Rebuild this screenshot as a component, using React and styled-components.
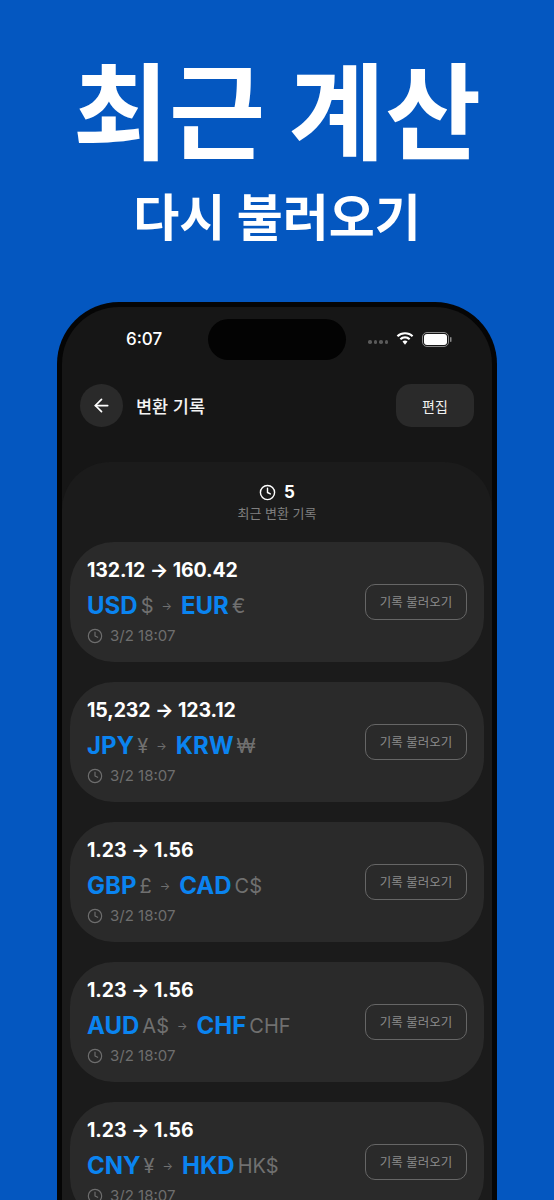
import React from 'react';
import styled, { createGlobalStyle } from 'styled-components';
import { ArrowLeft, Clock } from 'lucide-react';

const GlobalStyle = createGlobalStyle`
  html, body {
    margin: 0;
    padding: 0;
    background: #0457c0;
  }
  * {
    box-sizing: border-box;
  }
`;

const KR = `"Inter", "Noto Sans CJK KR", sans-serif`;

const Page = styled.div`
  width: 554px;
  height: 1200px;
  overflow: hidden;
  background: #0457c0;
  font-family: ${KR};
  display: flex;
  flex-direction: column;
  align-items: center;
`;

const Headline = styled.h1`
  margin: 40px 0 0;
  font-family: "Noto Sans CJK KR", sans-serif;
  font-size: 104.5px;
  line-height: 132px;
  font-weight: 700;
  color: #fff;
  white-space: nowrap;
`;

const SubHeadline = styled.h2`
  margin: 5px 0 0;
  font-family: "Noto Sans CJK KR", sans-serif;
  font-size: 50px;
  line-height: 74px;
  font-weight: 700;
  color: #fff;
  white-space: nowrap;
`;

const Phone = styled.div`
  margin-top: 51px;
  width: 440px;
  flex: 1;
  background: #161616;
  border: 5px solid #050505;
  border-bottom: none;
  border-radius: 62px 62px 0 0;
  display: flex;
  flex-direction: column;
  position: relative;
`;

const Island = styled.div`
  position: absolute;
  top: 12px;
  left: 146px;
  width: 138px;
  height: 41px;
  border-radius: 21px;
  background: #030303;
`;

const StatusBar = styled.div`
  height: 60px;
  padding: 4px 40px 0 64px;
  display: flex;
  align-items: center;
  justify-content: space-between;
`;

const Time = styled.span`
  font-size: 17px;
  font-weight: 500;
  color: #fff;
`;

const StatusIcons = styled.div`
  display: flex;
  align-items: center;
  gap: 8px;
`;

const Dots = styled.div`
  display: flex;
  gap: 2px;
  margin-top: 6px;
`;

const Dot = styled.i`
  width: 3.5px;
  height: 3.5px;
  border-radius: 50%;
  background: #5a5a5a;
`;

const NavBar = styled.div`
  margin-top: 17px;
  padding: 0 18px;
  display: flex;
  align-items: center;
  gap: 13px;
`;

const BackButton = styled.div`
  width: 43px;
  height: 43px;
  border-radius: 50%;
  background: #2a2a2a;
  color: #fff;
  display: flex;
  align-items: center;
  justify-content: center;
`;

const NavTitle = styled.span`
  flex: 1;
  font-size: 17.5px;
  font-weight: 500;
  color: #f4f4f4;
`;

const EditButton = styled.div`
  width: 78px;
  height: 43px;
  border-radius: 15px;
  background: #2a2a2a;
  color: #f0f0f0;
  font-size: 14px;
  font-weight: 400;
  display: flex;
  align-items: center;
  justify-content: center;
`;

const Panel = styled.div`
  margin-top: 35px;
  flex: 1;
  padding: 0 8px;
  background: #1b1b1b;
  border-radius: 48px 48px 0 0;
  display: flex;
  flex-direction: column;
`;

const Summary = styled.div`
  height: 80px;
  padding-top: 19px;
  display: flex;
  flex-direction: column;
  align-items: center;
`;

const SummaryCount = styled.div`
  display: flex;
  align-items: center;
  gap: 8px;
  font-size: 17px;
  line-height: 23px;
  font-weight: 700;
  color: #fff;
`;

const SummaryLabel = styled.div`
  font-size: 13px;
  line-height: 18px;
  color: #808080;
`;

const List = styled.div`
  display: flex;
  flex-direction: column;
  gap: 20px;
`;

const Card = styled.div`
  height: 120px;
  flex: none;
  padding: 0 17px;
  border-radius: 44px;
  background: #2a2a2a;
  display: flex;
  align-items: center;
  justify-content: space-between;
`;

const CardInfo = styled.div`
  margin-bottom: 2px;
  display: flex;
  flex-direction: column;
`;

const Amounts = styled.div`
  font-size: 19.5px;
  line-height: 24px;
  font-weight: 700;
  letter-spacing: -0.1px;
  color: #fff;
`;

const CurrencyRow = styled.div`
  margin-top: 8px;
  height: 32px;
  display: flex;
  align-items: center;
`;

const Code = styled.span`
  font-size: 24px;
  font-weight: 700;
  color: #0a84f0;
`;

const Symbol = styled.span`
  margin-left: 3px;
  font-size: 20px;
  color: #707070;
`;

const PairArrow = styled.span`
  margin: 0 9px 0 8px;
  font-size: 11px;
  color: #707070;
`;

const DateRow = styled.div`
  margin-top: 5px;
  display: flex;
  align-items: center;
  gap: 7px;
  font-size: 15px;
  line-height: 18px;
  color: #6e6e6e;
`;

const LoadButton = styled.div`
  width: 102px;
  height: 36px;
  padding-bottom: 2px;
  border: 1px solid #666;
  border-radius: 10px;
  font-size: 12.5px;
  color: #8a8a8a;
  display: flex;
  align-items: center;
  justify-content: center;
`;

const records = [
  { amounts: '132.12 → 160.42', from: 'USD', fromSymbol: '$', to: 'EUR', toSymbol: '€' },
  { amounts: '15,232 → 123.12', from: 'JPY', fromSymbol: '¥', to: 'KRW', toSymbol: '₩' },
  { amounts: '1.23 → 1.56', from: 'GBP', fromSymbol: '£', to: 'CAD', toSymbol: 'C$' },
  { amounts: '1.23 → 1.56', from: 'AUD', fromSymbol: 'A$', to: 'CHF', toSymbol: 'CHF' },
  { amounts: '1.23 → 1.56', from: 'CNY', fromSymbol: '¥', to: 'HKD', toSymbol: 'HK$' },
];

const Wifi = () => (
  <svg width="18" height="14" viewBox="0 0 18 14" fill="#fff">
    <path d="M9 2.300c2.600 0 5 1 6.800 2.800l1.500-1.600A11.800 11.800 0 0 0 9 .2 11.800 11.800 0 0 0 .7 3.500l1.500 1.600A9.700 9.700 0 0 1 9 2.300z" />
    <path d="M9 6.400c1.500 0 2.900.6 3.900 1.600l1.500-1.600A7.700 7.700 0 0 0 9 4.300a7.700 7.700 0 0 0-5.400 2.100L5.100 8c1-1 2.400-1.600 3.900-1.600z" />
    <path d="M9 8.600c-1 0-1.900.4-2.500 1L9 12.800l2.500-3.200c-.6-.6-1.500-1-2.500-1z" />
  </svg>
);

const Battery = () => (
  <svg width="30" height="15" viewBox="0 0 30 15">
    <rect x="0.500" y="0.500" width="26" height="14" rx="4.500" fill="none" stroke="#8a8a8a" />
    <rect x="2" y="2" width="23" height="11" rx="3" fill="#fff" />
    <rect x="28" y="5" width="1.500" height="5" rx="0.750" fill="#8a8a8a" />
  </svg>
);

const App = () => (
  <Page>
    <GlobalStyle />
    <Headline>최근 계산</Headline>
    <SubHeadline>다시 불러오기</SubHeadline>
    <Phone>
      <Island />
      <StatusBar>
        <Time>6:07</Time>
        <StatusIcons>
          <Dots>
            <Dot />
            <Dot />
            <Dot />
            <Dot />
          </Dots>
          <Wifi />
          <Battery />
        </StatusIcons>
      </StatusBar>
      <NavBar>
        <BackButton>
          <ArrowLeft size={21} strokeWidth={2} />
        </BackButton>
        <NavTitle>변환 기록</NavTitle>
        <EditButton>편집</EditButton>
      </NavBar>
      <Panel>
        <Summary>
          <SummaryCount>
            <Clock size={17} strokeWidth={2} />
            5
          </SummaryCount>
          <SummaryLabel>최근 변환 기록</SummaryLabel>
        </Summary>
        <List>
          {records.map((record) => (
            <Card key={record.from}>
              <CardInfo>
                <Amounts>{record.amounts}</Amounts>
                <CurrencyRow>
                  <Code>{record.from}</Code>
                  <Symbol>{record.fromSymbol}</Symbol>
                  <PairArrow>→</PairArrow>
                  <Code>{record.to}</Code>
                  <Symbol>{record.toSymbol}</Symbol>
                </CurrencyRow>
                <DateRow>
                  <Clock size={16} strokeWidth={1.75} />
                  3/2 18:07
                </DateRow>
              </CardInfo>
              <LoadButton>기록 불러오기</LoadButton>
            </Card>
          ))}
        </List>
      </Panel>
    </Phone>
  </Page>
);

export default App;
